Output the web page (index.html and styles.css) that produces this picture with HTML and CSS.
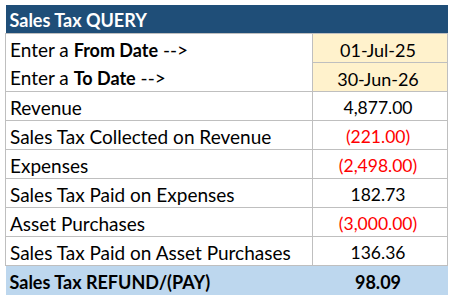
FILE: index.html
```html
<!DOCTYPE html>
<html>
<head>
<meta charset="utf-8">
<link rel="stylesheet" href="styles.css">
</head>
<body>
<table class="sheet">
  <colgroup><col class="c-label"><col class="c-value"></colgroup>
  <tr class="title"><td colspan="2">Sales Tax QUERY</td></tr>
  <tr class="date first"><td class="label">Enter a <b>From Date</b> --&gt;</td><td class="value input">01-Jul-25</td></tr>
  <tr class="date second"><td class="label">Enter a <b>To Date</b> --&gt;</td><td class="value input">30-Jun-26</td></tr>
  <tr><td class="label">Revenue</td><td class="value">4,877.00</td></tr>
  <tr><td class="label">Sales Tax Collected on Revenue</td><td class="value neg">(221.00)</td></tr>
  <tr><td class="label">Expenses</td><td class="value neg">(2,498.00)</td></tr>
  <tr><td class="label">Sales Tax Paid on Expenses</td><td class="value">182.73</td></tr>
  <tr><td class="label">Asset Purchases</td><td class="value neg">(3,000.00)</td></tr>
  <tr><td class="label">Sales Tax Paid on Asset Purchases</td><td class="value">136.36</td></tr>
  <tr class="total"><td class="label">Sales Tax REFUND/(PAY)</td><td class="value">98.09</td></tr>
</table>
</body>
</html>
```
FILE: styles.css
```css
html, body {
  margin: 0;
  background: #ffffff;
}
body {
  padding: 5px 4px 0 5px;
  font-family: Lato, "Open Sans", sans-serif;
  font-size: 19px;
  color: #000000;
}
.sheet {
  border-collapse: collapse;
  width: 442px;
  table-layout: fixed;
}
.c-label { width: 307px; }
.c-value { width: 135px; }
.sheet td {
  padding: 3px 0 0 4px;
  height: 25px;
  border: 1px solid #bfbfbf;
  white-space: nowrap;
  vertical-align: middle;
  line-height: 22px;
}
.sheet b {
  font-size: 18px;
}
.sheet .title td {
  background: #1f4e78;
  color: #ffffff;
  font-weight: 700;
  font-size: 18px;
  height: 26px;
  padding-top: 2px;
  border: none;
}
.sheet .value {
  text-align: center;
  padding: 3px 4px 0 0;
  font-size: 17.5px;
}
.sheet .input {
  font-size: 18px;
  background: #fff2cc;
}
.sheet .date.first .label { border-bottom: none; }
.sheet .date.second .label { border-top: none; }
.sheet .neg { color: #ff0000; }
.sheet .total td {
  background: #bdd7ee;
  font-weight: 700;
  font-size: 18px;
  border: none;
  height: 26px;
}
```
